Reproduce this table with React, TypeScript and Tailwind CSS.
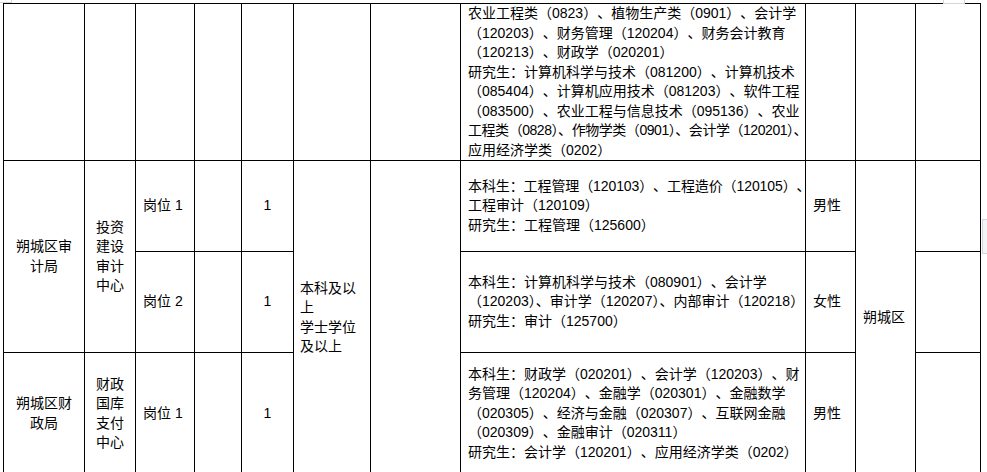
import type { ReactNode } from 'react';

const font = "font-['Liberation_Sans','Noto_Sans_CJK_SC',sans-serif]";

function Lines({ lines, className = '' }: { lines: string[]; className?: string }) {
  return (
    <div className={className}>
      {lines.map((l, i) => (
        <div key={i} className="whitespace-nowrap">
          {l}
        </div>
      ))}
    </div>
  );
}

function Cell({ className = '', children }: { className?: string; children?: ReactNode }) {
  return <div className={`flex border-r border-b border-black ${className}`}>{children}</div>;
}

const row1Major = [
  '农业工程类（0823）、植物生产类（0901）、会计学',
  '（120203）、财务管理（120204）、财务会计教育',
  '（120213）、财政学（020201）',
  '研究生：计算机科学与技术（081200）、计算机技术',
  '（085404）、计算机应用技术（081203）、软件工程',
  '（083500）、农业工程与信息技术（095136）、农业',
];

export default function App() {
  return (
    <div
      className={`relative h-[472px] w-[987px] overflow-hidden bg-white text-[14px] leading-[19.5px] text-black [text-spacing-trim:space-all] ${font}`}
    >
      {/* scroll / selection handles from the screenshot */}
      <div className="absolute left-0 top-0 h-[3px] w-[12px] border-r border-b border-gray-300" />
      <div className="absolute left-[943px] top-0 h-[4px] w-[22px] border-x border-b border-gray-300" />
      <div className="absolute left-[982px] top-[219px] h-[35px] w-[5px] border-y border-l border-gray-300 bg-gray-100" />

      <div className="ml-[3px] mt-[3px] grid w-fit grid-cols-[81px_51px_59px_47px_52px_77px_90px_345px_50px_60px_65px] grid-rows-[157px_91px_101px_122px] border-l border-t border-black">
        {/* Row 1 (continued from previous page) */}
        <Cell className="col-start-1 row-start-1" />
        <Cell className="col-start-2 row-start-1" />
        <Cell className="col-start-3 row-start-1" />
        <Cell className="col-start-4 row-start-1" />
        <Cell className="col-start-5 row-start-1" />
        <Cell className="col-start-6 row-start-1" />
        <Cell className="col-start-7 row-start-1" />
        <Cell className="col-start-8 row-start-1 items-start pl-[7px]">
          <div>
            <Lines lines={row1Major} />
            <div className="whitespace-nowrap tracking-[-0.45px] [text-spacing-trim:normal]">
              工程类（0828）、作物学类（0901）、会计学（120201）、
            </div>
            <div className="whitespace-nowrap">应用经济学类（0202）</div>
          </div>
        </Cell>
        <Cell className="col-start-9 row-start-1" />
        <Cell className="col-start-10 row-start-1" />
        <Cell className="col-start-11 row-start-1" />

        {/* 审计局 */}
        <Cell className="col-start-1 row-start-2 row-span-2 items-center justify-center">
          <Lines lines={['朔城区审', '计局']} className="text-center" />
        </Cell>
        <Cell className="col-start-2 row-start-2 row-span-2 items-center justify-center">
          <Lines lines={['投资', '建设', '审计', '中心']} className="text-center" />
        </Cell>
        <Cell className="col-start-3 row-start-2 items-center pl-[7px]">岗位 1</Cell>
        <Cell className="col-start-4 row-start-2" />
        <Cell className="col-start-5 row-start-2 items-center justify-center">1</Cell>
        <Cell className="col-start-6 row-start-2 row-span-3 items-center pl-[6px]">
          <Lines lines={['本科及以', '上', '学士学位', '及以上']} />
        </Cell>
        <Cell className="col-start-7 row-start-2 row-span-3" />
        <Cell className="col-start-8 row-start-2 items-center pl-[7px]">
          <div>
            <div className="whitespace-nowrap tracking-[-0.1px]">本科生：工程管理（120103）、工程造价（120105）、</div>
            <div className="whitespace-nowrap">工程审计（120109）</div>
            <div className="whitespace-nowrap">研究生：工程管理（125600）</div>
          </div>
        </Cell>
        <Cell className="col-start-9 row-start-2 items-center pl-[7px]">男性</Cell>
        <Cell className="col-start-10 row-start-2 row-span-3 items-center pl-[7px]">朔城区</Cell>
        <Cell className="col-start-11 row-start-2" />

        <Cell className="col-start-3 row-start-3 items-center pl-[7px]">岗位 2</Cell>
        <Cell className="col-start-4 row-start-3" />
        <Cell className="col-start-5 row-start-3 items-center justify-center">1</Cell>
        <Cell className="col-start-8 row-start-3 items-center pl-[7px]">
          <div>
            <div className="whitespace-nowrap">本科生：计算机科学与技术（080901）、会计学</div>
            <div className="whitespace-nowrap [text-spacing-trim:normal]">
              （120203）、审计学（120207）、内部审计（120218）
            </div>
            <div className="whitespace-nowrap">研究生：审计（125700）</div>
          </div>
        </Cell>
        <Cell className="col-start-9 row-start-3 items-center pl-[7px]">女性</Cell>
        <Cell className="col-start-11 row-start-3" />

        {/* 财政局 */}
        <Cell className="col-start-1 row-start-4 items-center justify-center">
          <Lines lines={['朔城区财', '政局']} className="text-center" />
        </Cell>
        <Cell className="col-start-2 row-start-4 items-center justify-center">
          <Lines lines={['财政', '国库', '支付', '中心']} className="text-center" />
        </Cell>
        <Cell className="col-start-3 row-start-4 items-center pl-[7px]">岗位 1</Cell>
        <Cell className="col-start-4 row-start-4" />
        <Cell className="col-start-5 row-start-4 items-center justify-center">1</Cell>
        <Cell className="col-start-8 row-start-4 items-center pl-[7px]">
          <Lines
            lines={[
              '本科生：财政学（020201）、会计学（120203）、财',
              '务管理（120204）、金融学（020301）、金融数学',
              '（020305）、经济与金融（020307）、互联网金融',
              '（020309）、金融审计（020311）',
              '研究生：会计学（120201）、应用经济学类（0202）',
            ]}
          />
        </Cell>
        <Cell className="col-start-9 row-start-4 items-center pl-[7px]">男性</Cell>
        <Cell className="col-start-11 row-start-4" />
      </div>
    </div>
  );
}
